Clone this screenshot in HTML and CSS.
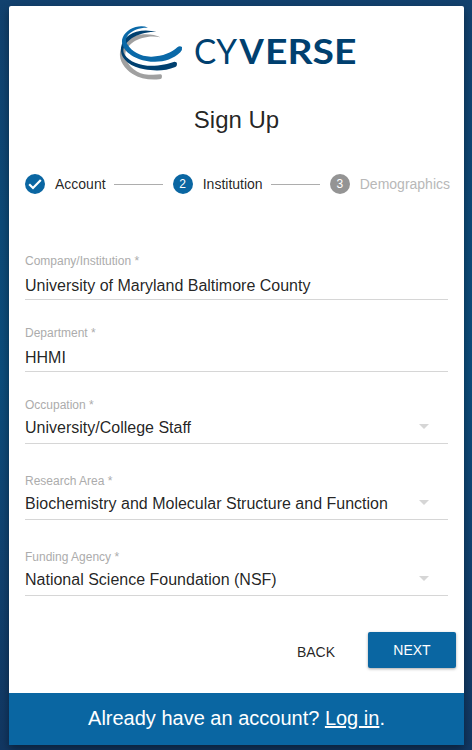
FILE: index.html
```html
<!DOCTYPE html>
<html lang="en">
<head>
<meta charset="utf-8">
<title>CyVerse Sign Up</title>
<link rel="stylesheet" href="styles.css">
</head>
<body>
<main class="card">
  <svg class="logo" viewBox="0 0 246 64" role="img" aria-label="CyVerse">
    <g transform="translate(-5 -5) scale(.33333)">
      <path fill="#a0a0a0" d="M151 67C122 60 91 68 70 81C51 94 43 110 47 128C53 153 82 178 116 179Q137 180 151 178Q158 178 155 190Q152 193 147 193C117 196 89 190 68 177C43 162 27 137 30 112C33 85 61 60 101 58Q132 57 151 67Z"/>
      <path fill="#00406f" d="M139 51C113 49 84 57 65 70C47 83 37 99 41 113C48 132 76 148 112 152C145 154 173 147 193 140Q201 140 201 147Q201 154 196 156C166 169 132 168 103 163C65 157 34 134 33 108C31 81 50 58 79 50Q110 42 139 51Z"/>
      <path fill="#0a69a8" d="M114 38C91 37 68 45 56 58C46 70 46 78 52 88C65 110 93 126 125 125C159 124 184 113 202 97Q209 91 216 96Q218 103 211 112C188 134 157 143 122 140C79 136 39 112 36 82C34 62 54 42 77 36Q99 31 114 38Z"/>
    </g>
    <text class="logo-light" x="79" y="44.3" textLength="43" lengthAdjust="spacingAndGlyphs">CY</text>
    <text class="logo-bold" y="44.3"><tspan x="124.5">V</tspan><tspan x="150" textLength="91.5" lengthAdjust="spacingAndGlyphs">ERSE</tspan></text>
  </svg>
  <h1>Sign Up</h1>
  <div class="stepper">
    <svg class="badge" viewBox="0 0 20 20"><circle cx="10" cy="10" r="10"/><path d="M4.2 10.3 8 14 15.8 6.1"/></svg>
    <span class="step">Account</span>
    <span class="line"></span>
    <span class="badge number">2</span>
    <span class="step">Institution</span>
    <span class="line"></span>
    <span class="badge number pending">3</span>
    <span class="step muted">Demographics</span>
  </div>
  <form class="fields">
    <div class="field"><label>Company/Institution *</label><div class="value">University of Maryland Baltimore County</div></div>
    <div class="field"><label>Department *</label><div class="value">HHMI</div></div>
    <div class="field select"><label>Occupation *</label><div class="value">University/College Staff<i></i></div></div>
    <div class="field select"><label>Research Area *</label><div class="value">Biochemistry and Molecular Structure and Function<i></i></div></div>
    <div class="field select"><label>Funding Agency *</label><div class="value">National Science Foundation (NSF)<i></i></div></div>
  </form>
  <div class="actions"><button class="back">BACK</button><button class="next">NEXT</button></div>
  <footer><span>Already have an account? <a href="#">Log in</a>.</span></footer>
</main>
</body>
</html>
```
FILE: styles.css
```css
* { box-sizing: border-box; }
body {
  margin: 0;
  height: 750px;
  padding: 6px 8px 5px 9px;
  overflow: hidden;
  background: linear-gradient(180deg, #12416e 0%, #0d4a78 30%, #0c4d7c 50%, #114270 75%, #123762 100%);
  font-family: "Liberation Sans", Arial, sans-serif;
  color: rgba(0, 0, 0, .87);
}
.card {
  display: flex;
  flex-direction: column;
  height: 739px;
  background: #fff;
  border-radius: 2px 2px 0 0;
  box-shadow: 0 4px 10px rgba(0, 0, 0, .4);
}
.logo { display: block; width: 246px; height: 64px; margin: 14px 0 0 106px; flex: none; }
.logo text { font-family: Lato, sans-serif; font-size: 35px; fill: #00406f; }
.logo .logo-light { font-weight: 400; }
.logo .logo-bold { font-weight: 700; }
h1 { margin: 20px 0 0; height: 32px; line-height: 32px; font-size: 24px; font-weight: 400; text-align: center; }
.stepper { display: flex; align-items: center; height: 20px; margin: 38px 14px 0 16px; font-size: 14px; white-space: nowrap; }
.badge { flex: none; width: 20px; height: 20px; margin-right: 10px; }
.badge circle { fill: #0a66a2; }
.badge path { fill: none; stroke: #fff; stroke-width: 2.2; }
.number { border-radius: 50%; background: #0a66a2; color: #fff; font-size: 12px; line-height: 20px; text-align: center; }
.pending { background: #949494; }
.muted { color: #b8b8b8; }
.line { flex: 1; height: 1px; margin: 0 10px 0 8px; background: #adadad; }
.fields { margin: 59px 16px 0; }
.field { height: 47px; margin-bottom: 25px; border-bottom: 1px solid #d6d6d6; }
.field.select { margin-bottom: 29px; }
label { display: block; height: 16px; line-height: 16px; font-size: 12px; color: #acacac; }
.value { display: flex; align-items: center; justify-content: space-between; height: 18px; margin-top: 8px; line-height: 18px; font-size: 16px; white-space: nowrap; }
.select .value { margin-top: 6px; }
.value i { border: 5px solid transparent; border-top-color: #d6d6d6; border-bottom: 0; margin: 0 19px 3px 0; }
.actions { display: flex; justify-content: flex-end; height: 36px; margin: 7px 8px 0 0; }
button { height: 36px; border: 0; padding: 0; font: 14px/36px "Liberation Sans", Arial, sans-serif; }
.back { width: 64px; margin-right: 20px; padding-top: 4px; line-height: 32px; background: none; color: rgba(0, 0, 0, .87); }
.next { width: 88px; border-radius: 2px; background: #0a66a2; color: #fff; box-shadow: 0 1px 3px rgba(0, 0, 0, .35); }
footer { display: flex; align-items: center; justify-content: center; height: 52px; margin-top: auto; padding-bottom: 2px; background: #0a66a2; color: #fff; font-size: 20px; }
footer a { color: inherit; }
```
